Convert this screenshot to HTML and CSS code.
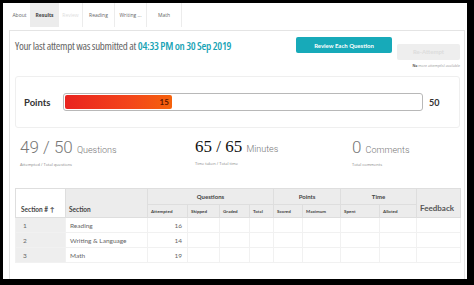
FILE: index.html
```html
<!DOCTYPE html>
<html lang="en">
<head>
  <meta charset="UTF-8" />
  <meta name="viewport" content="width=device-width, initial-scale=1" />
  <title>Results</title>
  <link rel="stylesheet" href="styles.css">
</head>
<body>
  <div class="frame">
    <!-- Вкладки -->
    <div class="tabs">
      <div class="tab">About</div>
      <div class="tab active">Results</div>
      <div class="tab disabled">Review</div>
      <div class="tab">Reading</div>
      <div class="tab">Writing ...</div>
      <div class="tab">Math</div>
    </div>

    <div class="panel">
      <div class="head">
        <div class="submitted">Your last attempt was submitted at <span class="when">04:33 PM on 30 Sep 2019</span></div>
        <div class="actions">
          <button class="btn review">Review Each Question</button>
          <div class="reattempt">
            <button class="btn retry" disabled>Re-Attempt</button>
            <div class="note"><b>No</b> more attempt(s) available</div>
          </div>
        </div>
      </div>

      <div class="points">
        <div class="points-label">Points</div>
        <div class="bar">
          <div class="fill" style="width: 30%;"><span>15</span></div>
        </div>
        <div class="points-max">50</div>
      </div>

      <div class="stats">
        <div class="stat">
          <div class="big">49 / 50 <small>Questions</small></div>
          <div class="caption">Attempted / Total questions</div>
        </div>
        <div class="stat">
          <div class="big serif">65 / 65 <small>Minutes</small></div>
          <div class="caption">Time taken / Total time</div>
        </div>
        <div class="stat">
          <div class="big">0 <small>Comments</small></div>
          <div class="caption">Total comments</div>
        </div>
      </div>

      <table class="sections">
        <colgroup>
          <col style="width:50px"><col style="width:82px"><col style="width:40px"><col style="width:32px">
          <col style="width:30px"><col style="width:24px"><col style="width:29px"><col style="width:38px">
          <col style="width:39px"><col style="width:37px"><col style="width:44px">
        </colgroup>
        <thead>
          <tr class="top">
            <th rowspan="2" class="tall">Section # &#8593;</th>
            <th rowspan="2" class="tall">Section</th>
            <th colspan="4">Questions</th>
            <th colspan="2">Points</th>
            <th colspan="2">Time</th>
            <th rowspan="2" class="tall feedback">Feedback</th>
          </tr>
          <tr class="sub">
            <th>Attempted</th><th>Skipped</th><th>Graded</th><th>Total</th>
            <th>Scored</th><th>Maximum</th><th>Spent</th><th>Alloted</th>
          </tr>
        </thead>
        <tbody>
          <tr><td class="num">1</td><td>Reading</td><td class="r">16</td><td></td><td></td><td></td><td></td><td></td><td></td><td></td><td></td></tr>
          <tr><td class="num">2</td><td>Writing &amp; Language</td><td class="r">14</td><td></td><td></td><td></td><td></td><td></td><td></td><td></td><td></td></tr>
          <tr><td class="num">3</td><td>Math</td><td class="r">19</td><td></td><td></td><td></td><td></td><td></td><td></td><td></td><td></td></tr>
        </tbody>
      </table>
    </div>
  </div>
</body>
</html>
```

FILE: styles.css
```css
* {
  box-sizing: border-box;
}
body {
  margin: 0;
  background: #000;
  font-family: 'Open Sans', sans-serif;
  color: #555;
}

.frame {
  margin: 3px 7px 0 3px;
  width: 464px;
  height: 276px;
  background: #fff;
  padding: 0 0 0 6px;
  overflow: hidden;
}

.tabs {
  display: flex;
  height: 24px;
}
.tab {
  display: flex;
  align-items: center;
  justify-content: center;
  font-size: 5px;
  color: #666;
  white-space: nowrap;
  border-right: 1px solid #ececec;
  padding: 0 2px;
}
.tab:nth-child(1) { width: 22px; }
.tab:nth-child(2) { width: 28px; }
.tab:nth-child(3) { width: 24px; }
.tab:nth-child(4) { width: 32px; }
.tab:nth-child(5) { width: 32px; }
.tab:nth-child(6) { width: 35px; }
.tab.active {
  background: #ececec;
  font-weight: bold;
  color: #444;
}
.tab.disabled {
  color: #ddd;
}

.panel {
  margin-top: 3px;
  width: 456px;
  height: 260px;
  border: 1px solid #e4e4e4;
  border-bottom: none;
  padding: 6px 4px 0 5px;
}

.head {
  display: flex;
  justify-content: space-between;
  align-items: flex-start;
  height: 39px;
}
.submitted {
  margin-top: 1px;
  font-size: 11px;
  font-stretch: condensed;
  letter-spacing: -0.3px;
  color: #666;
}
.when {
  color: #18a3b5;
  font-weight: 600;
}
.actions {
  display: flex;
  gap: 5px;
}
.btn {
  font-family: Lato, sans-serif;
  font-weight: bold;
  font-size: 6px;
  height: 16px;
  border: none;
  border-radius: 2px;
  cursor: pointer;
}
.review {
  width: 96px;
  background: #17aab9;
  color: #fff;
}
.retry {
  width: 63px;
  background: #eeeeee;
  color: #dcdcdc;
}
.note {
  margin-top: 3px;
  font-size: 3.5px;
  text-align: right;
  color: #999;
}
.note b {
  color: #555;
}

.points {
  display: flex;
  align-items: center;
  height: 52px;
  border: 1px solid #efefef;
  border-radius: 3px;
  padding: 0 0 0 8px;
}
.points-label {
  width: 39px;
  font-family: Lato, sans-serif;
  font-weight: bold;
  font-size: 9.5px;
  color: #333;
}
.bar {
  width: 360px;
  height: 18px;
  border: 1px solid #b8b8b8;
  border-radius: 3px;
  padding: 1px;
  background: #fff;
}
.fill {
  height: 100%;
  border-radius: 2px;
  background: linear-gradient(90deg, #e9231f, #f3451b 60%, #f5620c);
  display: flex;
  justify-content: flex-end;
  align-items: center;
  padding-right: 3px;
}
.fill span {
  font-family: Lato, sans-serif;
  font-size: 8px;
  font-weight: bold;
  color: #5b1500;
}
.points-max {
  margin-left: 6px;
  font-family: Lato, sans-serif;
  font-weight: bold;
  font-size: 9px;
  color: #333;
}

.stats {
  display: grid;
  grid-template-columns: 175px 157px auto;
  padding: 9px 0 0 5px;
  height: 60px;
}
.big {
  font-family: Roboto, sans-serif;
  font-weight: 300;
  font-size: 17px;
  color: #777;
  line-height: 20px;
}
.big small {
  font-size: 9px;
}
.big.serif {
  font-family: 'Liberation Serif', serif;
  font-weight: normal;
  color: #111;
}
.big.serif small {
  font-family: Roboto, sans-serif;
  font-weight: 300;
  color: #777;
}
.caption {
  margin-top: 2px;
  font-size: 4px;
  color: #888;
}

.sections {
  width: 445px;
  border-collapse: collapse;
  table-layout: fixed;
  font-family: Lato, sans-serif;
  border: 1px solid #dcdcdc;
}
.sections th {
  background: #ececec;
  color: #444;
  font-weight: bold;
  font-size: 6px;
  border: 1px solid #dedede;
  padding: 0 3px;
}
.sections tr.top th {
  height: 16px;
}
.sections tr.sub th {
  height: 13px;
  font-size: 4.5px;
  text-align: left;
}
.sections th.tall {
  text-align: left;
  vertical-align: bottom;
  padding-bottom: 4px;
  font-size: 6.5px;
}
.sections th.tall:first-child {
  background: #fff;
  padding-left: 5px;
}
.sections th.feedback {
  font-size: 8px;
  color: #555;
}
.sections td {
  height: 15px;
  font-size: 6.5px;
  color: #666;
  border: 1px solid #f1f1f1;
  padding: 0 4px;
}
.sections td.num {
  background: #eeeeee;
  padding-left: 7px;
}
.sections td.r {
  text-align: right;
  padding-right: 5px;
}
```
